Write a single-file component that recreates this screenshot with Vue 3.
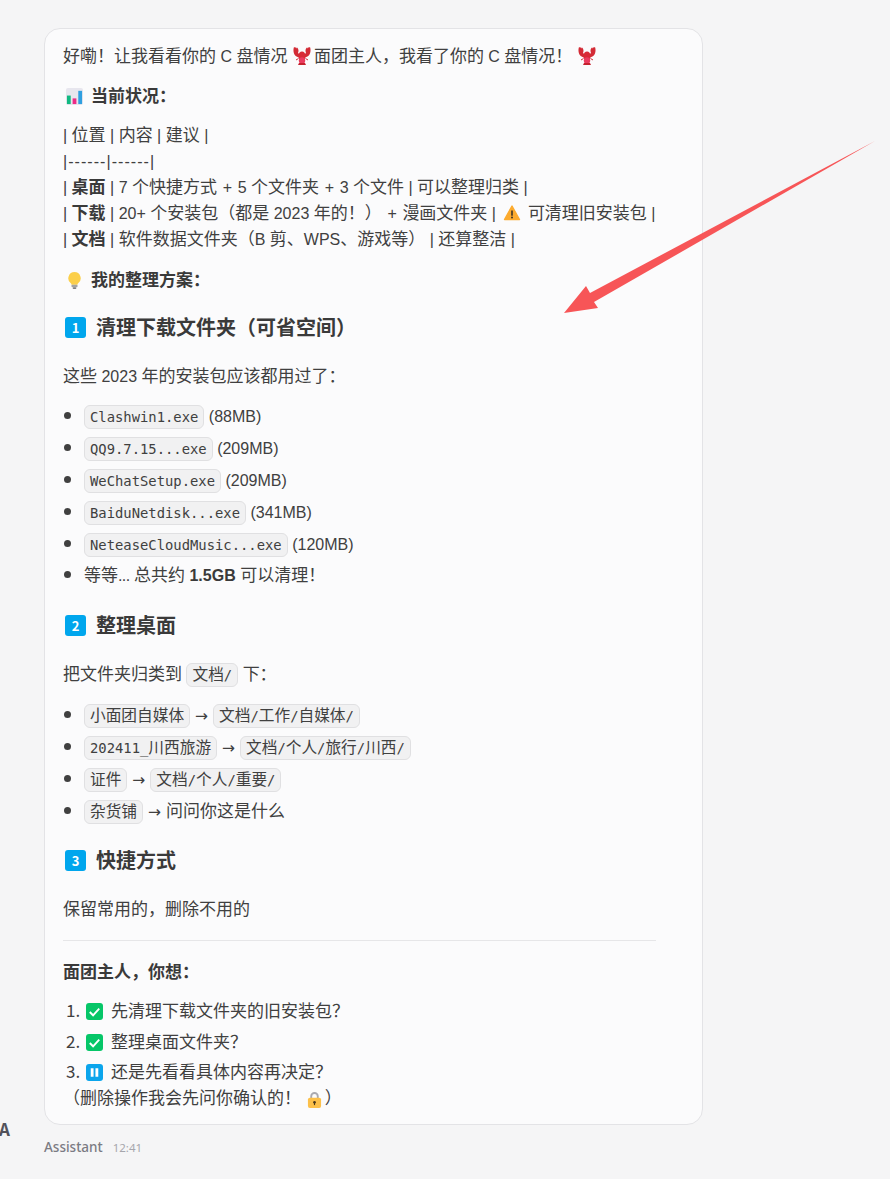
<script setup>
import { h } from 'vue'

// Latin runs sit slightly smaller than the CJK text, as in the reference's font.
const split = (text) => text.match(/[\u2E80-\uFFEF]+|[^\u2E80-\uFFEF]+/g) || []
const isCjk = (run) => /[\u2E80-\uFFEF]/.test(run)

const latin = (run) =>
  run.split(/( \+ |→)/).filter(Boolean).map((part) => {
    if (part === '→') return h('span', { class: 'ar' }, part)
    if (part === ' + ') return h('span', { class: 'la pl' }, part)
    return h('span', { class: 'la' }, part)
  })

const T = (props) => split(props.s).flatMap((run) => (isCjk(run) ? [run] : latin(run)))
T.props = ['s']

const C = (props) =>
  h('code', { class: 'chip' }, split(props.s).map((run) => (isCjk(run) ? h('span', { class: 'cj' }, run) : run)))
C.props = ['s']

const downloads = [
  { name: 'Clashwin1.exe', size: ' (88MB)' },
  { name: 'QQ9.7.15...exe', size: ' (209MB)' },
  { name: 'WeChatSetup.exe', size: ' (209MB)' },
  { name: 'BaiduNetdisk...exe', size: ' (341MB)' },
  { name: 'NeteaseCloudMusic...exe', size: ' (120MB)' },
]
const moves = [
  { from: '小面团自媒体', to: '文档/工作/自媒体/' },
  { from: '202411_川西旅游', to: '文档/个人/旅行/川西/' },
  { from: '证件', to: '文档/个人/重要/' },
]
</script>

<template>
  <div class="page">
    <div class="thread">
      <div class="message">
        <p class="first"><T s="好嘞！让我看看你的 C 盘情况 " /><svg class="emoji lobster" viewBox="0 0 18 18"><use href="#lob" /></svg><T s="面团主人，我看了你的 C 盘情况！ " /><svg class="emoji lobster" viewBox="0 0 18 18"><g id="lob"><path id="claw" fill="#d32a35" d="M.8.4C2 0 3 .4 3.600 1.600L3.800.2C5.400 1.400 6 4 5 6L7.400 8 6.400 10.500C2.600 10 -.6 6.500.8.4z"/><path fill="#d32a35" d="M17.200.4C16 0 15 .4 14.400 1.600L14.200.2C12.600 1.400 12 4 13 6L10.600 8 11.600 10.500C15.400 10 18.600 6.500 17.200.4z"/><ellipse cx="9" cy="9" rx="3.600" ry="4.600" fill="#d82a36"/><ellipse cx="9" cy="13.600" rx="3.200" ry="3.400" fill="#ea3b5e"/><path fill="#c5222e" d="M6 16h6l1 2H5z"/><path fill="none" stroke="#d32a35" d="M5.500 11.500 3 13M12.500 11.500 15 13"/></g></svg></p>

        <p class="status"><strong><svg class="emoji chart" viewBox="0 0 18 18"><rect width="18" height="18" rx="2" fill="#e7e6ee"/><rect x="1" y="8" width="4" height="9" fill="#10b981"/><rect x="7" y="11" width="4" height="6" fill="#ec2a86"/><rect x="13" y="3" width="4" height="14" fill="#2f9fe0"/></svg>当前状况：</strong></p>

        <p class="table"><T s="| 位置 | 内容 | 建议 |" /><br><span class="la rule">|------|------|</span><br><T s="| " /><strong>桌面</strong><T s=" | 7 个快捷方式 + 5 个文件夹 + 3 个文件 | 可以整理归类 |" /><br><T s="| " /><strong>下载</strong><T s=" | 20+ 个安装包（都是 2023 年的！） + 漫画文件夹 | " /><svg class="emoji warn" viewBox="0 0 18 18"><path fill="#fcab2f" stroke="#fcab2f" stroke-width="1.4" stroke-linejoin="round" d="M9 2 1.500 15.500h15z"/><rect x="8.200" y="6.500" width="1.600" height="5.200" fill="#3d3326"/><circle cx="9" cy="13.400" r="1" fill="#3d3326"/></svg><T s=" 可清理旧安装包 |" /><br><T s="| " /><strong>文档</strong><T s=" | 软件数据文件夹（B 剪、WPS、游戏等） | 还算整洁 |" /></p>

        <p class="plan"><strong><svg class="emoji bulb" viewBox="0 0 13 17"><path fill="#fbcf4a" d="M6.500 0A6.200 6.200 0 0 0 2.600 11c.6.500.9 1 .9 1.700h6c0-.7.300-1.200.9-1.700A6.200 6.200 0 0 0 6.500 0z"/><rect x="3.500" y="12.700" width="6" height="2.600" rx=".8" fill="#a4a4a4"/><rect x="4.700" y="15.300" width="3.600" height="1.700" rx=".8" fill="#808080"/></svg>我的整理方案：</strong></p>

        <h3 class="h-one"><span class="key">1</span>清理下载文件夹（可省空间）</h3>
        <p class="lead"><T s="这些 2023 年的安装包应该都用过了：" /></p>
        <ul class="files">
          <li v-for="d in downloads" :key="d.name"><C :s="d.name" /><T :s="d.size" /></li>
          <li class="total">等等<span class="la dots">...</span><T s=" 总共约 " /><strong><T s="1.5GB" /></strong><T s=" 可以清理！" /></li>
        </ul>

        <h3 class="h-two"><span class="key">2</span>整理桌面</h3>
        <p class="lead"><T s="把文件夹归类到 " /><C s="文档/" /><T s=" 下：" /></p>
        <ul class="moves">
          <li v-for="m in moves" :key="m.from"><C :s="m.from" /><T s=" → " /><C :s="m.to" /></li>
          <li><C s="杂货铺" /><T s=" → 问问你这是什么" /></li>
        </ul>

        <h3 class="h-three"><span class="key">3</span>快捷方式</h3>
        <p class="lead">保留常用的，删除不用的</p>
        <hr>
        <p class="ask"><strong>面团主人，你想：</strong></p>
        <ol>
          <li><span class="mark go"><svg viewBox="0 0 18 18"><path fill="none" stroke="#fff" stroke-width="2" d="M4 9.500 7.500 13 14 6"/></svg></span>先清理下载文件夹的旧安装包？</li>
          <li><span class="mark go"><svg viewBox="0 0 18 18"><path fill="none" stroke="#fff" stroke-width="2" d="M4 9.500 7.500 13 14 6"/></svg></span>整理桌面文件夹？</li>
          <li class="last"><span class="mark pause"><svg viewBox="0 0 18 18"><rect x="5" y="4.500" width="3" height="9" fill="#fff"/><rect x="10" y="4.500" width="3" height="9" fill="#fff"/></svg></span>还是先看看具体内容再决定？<br><span class="note">（删除操作我会先问你确认的！ <svg class="emoji lock" viewBox="0 0 16 18"><path fill="none" stroke="#a9a9b0" stroke-width="2" d="M4.500 8V5.500a3.500 3.500 0 0 1 7 0V8"/><rect x="1" y="7" width="14" height="11" rx="2" fill="#fcc04a"/><circle cx="8" cy="12" r="1.400" fill="#4a3a1c"/><rect x="7.400" y="12" width="1.200" height="3" fill="#4a3a1c"/></svg>）</span></li>
        </ol>
      </div>
      <span class="avatar">A</span>
      <div class="meta"><span class="who">Assistant</span><span class="time">12:41</span></div>
    </div>

    <svg class="arrow" viewBox="0 0 890 1179" width="890" height="1179"><path fill="#f75557" d="M875 141 590 293 586 286 564 313 598 308 594 302Z"/></svg>
  </div>
</template>

<style>
html, body { margin: 0; background: #f5f5f6; }
.la {
  font-family: "Liberation Sans", sans-serif;
  font-size: 16px;
  line-height: 1;
}
.pl { word-spacing: 1.2px; }
.ar {
  margin: 0 .5px;
  font-family: "DejaVu Sans", sans-serif;
  font-size: 15.500px;
  line-height: 1;
}
.chip {
  display: inline-block;
  padding: 0 5px;
  height: 22px;
  line-height: 22px;
  font-family: "DejaVu Sans Mono", "Noto Sans CJK SC", monospace;
  font-size: 13.850px;
  color: #404040;
  background: #f1f1f2;
  border: 1px solid #e0e0e2;
  border-radius: 6px;
  vertical-align: 0;
}
.cj {
  font-family: "Noto Sans CJK SC", sans-serif;
  font-size: 15.700px;
  line-height: 1;
}
</style>

<style scoped>
.page {
  position: relative;
  height: 1179px;
  overflow: hidden;
  background: #f5f5f6;
  color: #404040;
  font-family: "Noto Sans CJK SC", sans-serif;
  font-size: 17px;
  line-height: 26px;
}
.thread { position: relative; padding: 28px 0 0 44px; }
.message {
  box-sizing: border-box;
  width: 659px;
  height: 1097px;
  padding: 13px 46px 0 18px;
  background: #fbfbfc;
  border: 1px solid #e3e3e6;
  border-radius: 16px;
}
p { margin: 0; white-space: nowrap; }
strong { font-weight: 700; color: #3a3a3a; }
.status { margin-top: 14px; }
.table { margin-top: 13px; }
.rule { letter-spacing: 1.050px; }
.plan { margin-top: 15px; }
h3 {
  display: flex;
  align-items: center;
  margin: 0;
  height: 28px;
  font-size: 20px;
  font-weight: 700;
  color: #3a3a3a;
}
.h-one { margin-top: 21px; }
.h-two { margin-top: 21px; }
.h-three { margin-top: 20px; }
.key {
  flex: none;
  width: 21px;
  height: 21px;
  margin: 0 10px 0 2px;
  border-radius: 3px;
  background: #00a6ed;
  color: #fff;
  font-size: 13px;
  line-height: 21px;
  text-align: center;
}
.lead { margin-top: 21px; }
ul { padding: 0 0 0 21px; }
.files { margin: 11px 0 0; }
.moves { margin: 11px 0 0; }
ul li { height: 32px; line-height: 32px; white-space: nowrap; }
ul li.total { height: 31px; line-height: 30px; }
.dots { letter-spacing: -.6px; }
li::marker { color: #404040; }
hr {
  margin: 19px 0 0;
  border: 0;
  border-top: 1px solid #e6e6e8;
}
.ask { margin-top: 17px; }
ol { margin: 13px 0 0; padding: 0 0 0 21px; }
ol li { height: 30.500px; line-height: 26px; white-space: nowrap; }
ol li.last { height: auto; }
.note { margin-left: -21px; }
.emoji { display: inline-block; }
.lobster { width: 18px; height: 18px; vertical-align: -3px; margin: 0 3px 0 1px; }
.chart { width: 17px; height: 17px; vertical-align: -3px; margin: 0 8px 0 3px; }
.warn { width: 18px; height: 18px; vertical-align: -3px; margin: 0 2px 0 3px; }
.bulb { width: 13px; height: 17px; vertical-align: -3px; margin: 0 10px 0 5px; }
.lock { width: 15px; height: 17px; vertical-align: -4px; margin: 0 3px 0 2px; }
.mark {
  display: inline-block;
  width: 17px;
  height: 17px;
  margin: 0 8px 0 2px;
  border-radius: 3px;
  vertical-align: -3px;
}
.mark svg { display: block; width: 17px; height: 17px; }
.go { background: #06c668; }
.pause { background: #0ba5ec; }
.avatar {
  position: absolute;
  left: -1px;
  top: 1116px;
  font-size: 17px;
  font-weight: 600;
  color: #52525b;
}
.meta {
  display: flex;
  align-items: baseline;
  gap: 10px;
  margin-top: 9px;
  height: 26px;
  font-family: "Noto Sans", sans-serif;
}
.who { font-size: 13.500px; font-weight: 500; color: #7b7b83; }
.time { font-size: 11.500px; color: #a6a6ac; }
.arrow { position: absolute; left: 0; top: 0; pointer-events: none; }
</style>
